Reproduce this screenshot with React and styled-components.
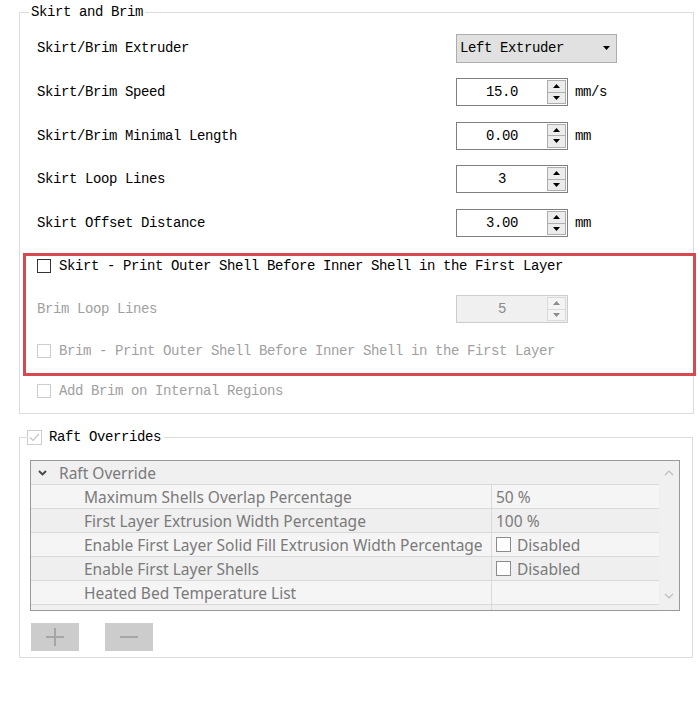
import styled, { createGlobalStyle } from "styled-components";

const GlobalStyle = createGlobalStyle`
  html, body {
    margin: 0;
    padding: 0;
    background: #ffffff;
  }
  body {
    font-family: 'Liberation Mono', monospace;
  }
`;

const rows = [
  { label: "Maximum Shells Overlap Percentage", value: "50 %" },
  { label: "First Layer Extrusion Width Percentage", value: "100 %" },
  { label: "Enable First Layer Solid Fill Extrusion Width Percentage", check: true },
  { label: "Enable First Layer Shells", check: true },
  { label: "Heated Bed Temperature List", value: "" },
];

function Arrow({ up, color = "#000" }) {
  return (
    <svg width="7" height="4" viewBox="0 0 7 4">
      <polygon points={up ? "0,4 7,4 3.5,0" : "0,0 7,0 3.5,4"} fill={color} />
    </svg>
  );
}

function SpinBox({ value, disabled }) {
  return (
    <Spin $disabled={disabled}>
      <SpinValue>{value}</SpinValue>
      <SpinButtons>
        <SpinBtn $disabled={disabled}><Arrow up color={disabled ? "#8c8c8c" : "#000"} /></SpinBtn>
        <SpinBtn $disabled={disabled}><Arrow color={disabled ? "#8c8c8c" : "#000"} /></SpinBtn>
      </SpinButtons>
    </Spin>
  );
}

function CheckBox({ checked, disabled, size = 14 }) {
  return (
    <Box $disabled={disabled} $size={size}>
      {checked && (
        <svg width="11" height="9" viewBox="0 0 11 9">
          <polyline points="1,4.5 4,7.5 10,1" fill="none" stroke="#c4c4c4" strokeWidth="1.2" />
        </svg>
      )}
    </Box>
  );
}

export default function App() {
  return (
    <>
      <GlobalStyle />
      <Page>
        <Group>
          <Legend>Skirt and Brim</Legend>
          <Rows>
            <Row>
              <Label>Skirt/Brim Extruder</Label>
              <Select>
                <span>Left Extruder</span>
                <Arrow />
              </Select>
            </Row>
            <Row>
              <Label>Skirt/Brim Speed</Label>
              <SpinBox value="15.0" />
              <Unit>mm/s</Unit>
            </Row>
            <Row $h={43}>
              <Label>Skirt/Brim Minimal Length</Label>
              <SpinBox value="0.00" />
              <Unit>mm</Unit>
            </Row>
            <Row>
              <Label>Skirt Loop Lines</Label>
              <SpinBox value="3" />
            </Row>
            <Row>
              <Label>Skirt Offset Distance</Label>
              <SpinBox value="3.00" />
              <Unit>mm</Unit>
            </Row>
          </Rows>
          <Highlight>
            <CheckRow>
              <CheckBox />
              <CheckText>Skirt - Print Outer Shell Before Inner Shell in the First Layer</CheckText>
            </CheckRow>
            <Row $h={28} $mt={19} $pl={0}>
              <Label $disabled $w={419}>Brim Loop Lines</Label>
              <SpinBox value="5" disabled />
            </Row>
            <CheckRow $mt={18}>
              <CheckBox disabled />
              <CheckText $disabled>Brim - Print Outer Shell Before Inner Shell in the First Layer</CheckText>
            </CheckRow>
          </Highlight>
          <CheckRow $mt={5} $pl={17}>
            <CheckBox disabled />
            <CheckText $disabled>Add Brim on Internal Regions</CheckText>
          </CheckRow>
        </Group>

        <RaftGroup>
          <RaftLegend>
            <CheckBox checked disabled size={15} />
            <span>Raft Overrides</span>
          </RaftLegend>
          <Table>
            <TableBody>
              <HeaderRow>
                <Chevron>
                  <svg width="9" height="6" viewBox="0 0 9 6">
                    <polyline points="1,1 4.5,4.5 8,1" fill="none" stroke="#444" strokeWidth="1.8" />
                  </svg>
                </Chevron>
                Raft Override
              </HeaderRow>
              {rows.map((r, i) => (
                <DataRow key={r.label} $alt={i % 2 === 1}>
                  <NameCell>{r.label}</NameCell>
                  <ValueCell>
                    {r.check ? (
                      <>
                        <SmallBox />
                        Disabled
                      </>
                    ) : (
                      r.value
                    )}
                  </ValueCell>
                </DataRow>
              ))}
              <DataRow $alt $partial>
                <NameCell />
                <ValueCell />
              </DataRow>
            </TableBody>
            <ScrollBar>
              <svg width="10" height="7" viewBox="0 0 10 7">
                <polyline points="1,6 5,2 9,6" fill="none" stroke="#bdbdbd" strokeWidth="1.2" />
              </svg>
              <svg width="10" height="7" viewBox="0 0 10 7">
                <polyline points="1,1 5,5 9,1" fill="none" stroke="#bdbdbd" strokeWidth="1.2" />
              </svg>
            </ScrollBar>
          </Table>
          <Buttons>
            <ToolButton>
              <svg width="20" height="20" viewBox="0 0 20 20">
                <path d="M10 1 V19 M1 10 H19" stroke="#a6a6a6" strokeWidth="2" />
              </svg>
            </ToolButton>
            <ToolButton>
              <svg width="20" height="20" viewBox="0 0 20 20">
                <path d="M1 10 H19" stroke="#a6a6a6" strokeWidth="2" />
              </svg>
            </ToolButton>
          </Buttons>
        </RaftGroup>
      </Page>
    </>
  );
}

const Page = styled.div`
  width: 700px;
  height: 714px;
  padding-top: 3px;
  box-sizing: border-box;
  font-size: 14px;
  letter-spacing: -0.4px;
  color: #000;
`;

const Group = styled.fieldset`
  margin: 0 6px 0 19px;
  padding: 0 0 12px 0;
  border: 1px solid #dcdcdc;
  min-width: 0;
`;

const Legend = styled.legend`
  margin-left: 9px;
  padding: 0 2px;
  line-height: 18px;
  height: 18px;
`;

const Rows = styled.div`
  padding-top: 5px;
`;

const Row = styled.div`
  display: flex;
  align-items: center;
  height: ${(p) => p.$h ?? 44}px;
  margin-top: ${(p) => p.$mt ?? 0}px;
  padding-left: ${(p) => p.$pl ?? 17}px;
`;

const Label = styled.div`
  width: ${(p) => p.$w ?? 419}px;
  flex: none;
  color: ${(p) => (p.$disabled ? "#a0a0a0" : "#000")};
`;

const Select = styled.div`
  width: 161px;
  height: 29px;
  box-sizing: border-box;
  background: #e1e1e1;
  border: 1px solid #adadad;
  display: flex;
  align-items: center;
  justify-content: space-between;
  padding: 0 6px 0 3px;
`;

const Spin = styled.div`
  width: 112px;
  height: 28px;
  box-sizing: border-box;
  border: 1px solid ${(p) => (p.$disabled ? "#cccccc" : "#7f7f7f")};
  background: ${(p) => (p.$disabled ? "#f0f0f0" : "#fff")};
  color: ${(p) => (p.$disabled ? "#8a8a8a" : "#000")};
  display: flex;
  align-items: stretch;
  padding: 1px 1px 1px 0;
`;

const SpinValue = styled.div`
  flex: 1;
  display: flex;
  align-items: center;
  justify-content: center;
`;

const SpinButtons = styled.div`
  width: 19px;
  display: flex;
  flex-direction: column;
`;

const SpinBtn = styled.div`
  flex: 1;
  display: flex;
  align-items: center;
  justify-content: center;
  border: 1px solid ${(p) => (p.$disabled ? "#dadada" : "#adadad")};
  background: ${(p) => (p.$disabled ? "#f4f4f4" : "#ececec")};
  & + & {
    border-top: none;
  }
`;

const Unit = styled.span`
  margin-left: 7px;
`;

const Highlight = styled.div`
  margin: 8px -3px 0 3px;
  border: 3px solid #d64a4f;
  padding: 0 0 12px 11px;
`;

const CheckRow = styled.div`
  display: flex;
  align-items: center;
  height: 20px;
  margin-top: ${(p) => p.$mt ?? 0}px;
  padding-left: ${(p) => p.$pl ?? 0}px;
  gap: 8px;
`;

const Box = styled.span`
  width: ${(p) => p.$size}px;
  height: ${(p) => p.$size}px;
  box-sizing: border-box;
  border: 1px solid ${(p) => (p.$disabled ? "#cccccc" : "#333333")};
  background: #fff;
  display: inline-flex;
  align-items: center;
  justify-content: center;
  flex: none;
`;

const CheckText = styled.span`
  color: ${(p) => (p.$disabled ? "#a0a0a0" : "#000")};
`;

const RaftGroup = styled.fieldset`
  margin: 14px 7px 0 19px;
  padding: 0 0 6px 0;
  border: 1px solid #dcdcdc;
  min-width: 0;
`;

const RaftLegend = styled.legend`
  margin-left: 6px;
  padding: 0 3px 0 1px;
  height: 18px;
  display: flex;
  align-items: center;
  gap: 7px;
`;

const Table = styled.div`
  margin: 14px 12px 0 10px;
  height: 151px;
  box-sizing: border-box;
  border: 1px solid #999999;
  display: flex;
  overflow: hidden;
  font-family: 'Noto Sans', 'Open Sans', sans-serif;
  font-size: 15.5px;
  letter-spacing: 0;
  color: #7a7a7a;
`;

const TableBody = styled.div`
  flex: 1;
  display: flex;
  flex-direction: column;
`;

const HeaderRow = styled.div`
  height: 24px;
  flex: none;
  background: #f0f0f0;
  display: flex;
  align-items: center;
  border-bottom: 1px solid #d9d9d9;
  box-sizing: border-box;
`;

const Chevron = styled.span`
  width: 28px;
  padding-left: 7px;
  box-sizing: border-box;
  display: flex;
  align-items: center;
`;

const DataRow = styled.div`
  height: ${(p) => (p.$partial ? 6 : 24)}px;
  flex: none;
  box-sizing: border-box;
  display: flex;
  background: ${(p) => (p.$alt ? "#efefef" : "#f5f5f5")};
  border-bottom: 1px solid #d9d9d9;
`;

const NameCell = styled.div`
  width: 461px;
  box-sizing: border-box;
  padding-left: 53px;
  border-right: 1px solid #d9d9d9;
  display: flex;
  align-items: center;
  white-space: nowrap;
`;

const ValueCell = styled.div`
  flex: 1;
  padding-left: 4px;
  display: flex;
  align-items: center;
  gap: 6px;
`;

const SmallBox = styled.span`
  width: 15px;
  height: 15px;
  box-sizing: border-box;
  border: 1px solid #8c8c8c;
  background: #fff;
`;

const ScrollBar = styled.div`
  width: 20px;
  flex: none;
  background: #f0f0f0;
  display: flex;
  flex-direction: column;
  justify-content: space-between;
  align-items: center;
  padding: 8px 0 10px;
`;

const Buttons = styled.div`
  display: flex;
  gap: 26px;
  margin: 12px 0 0 11px;
`;

const ToolButton = styled.div`
  width: 48px;
  height: 28px;
  background: #cccccc;
  display: flex;
  align-items: center;
  justify-content: center;
`;
